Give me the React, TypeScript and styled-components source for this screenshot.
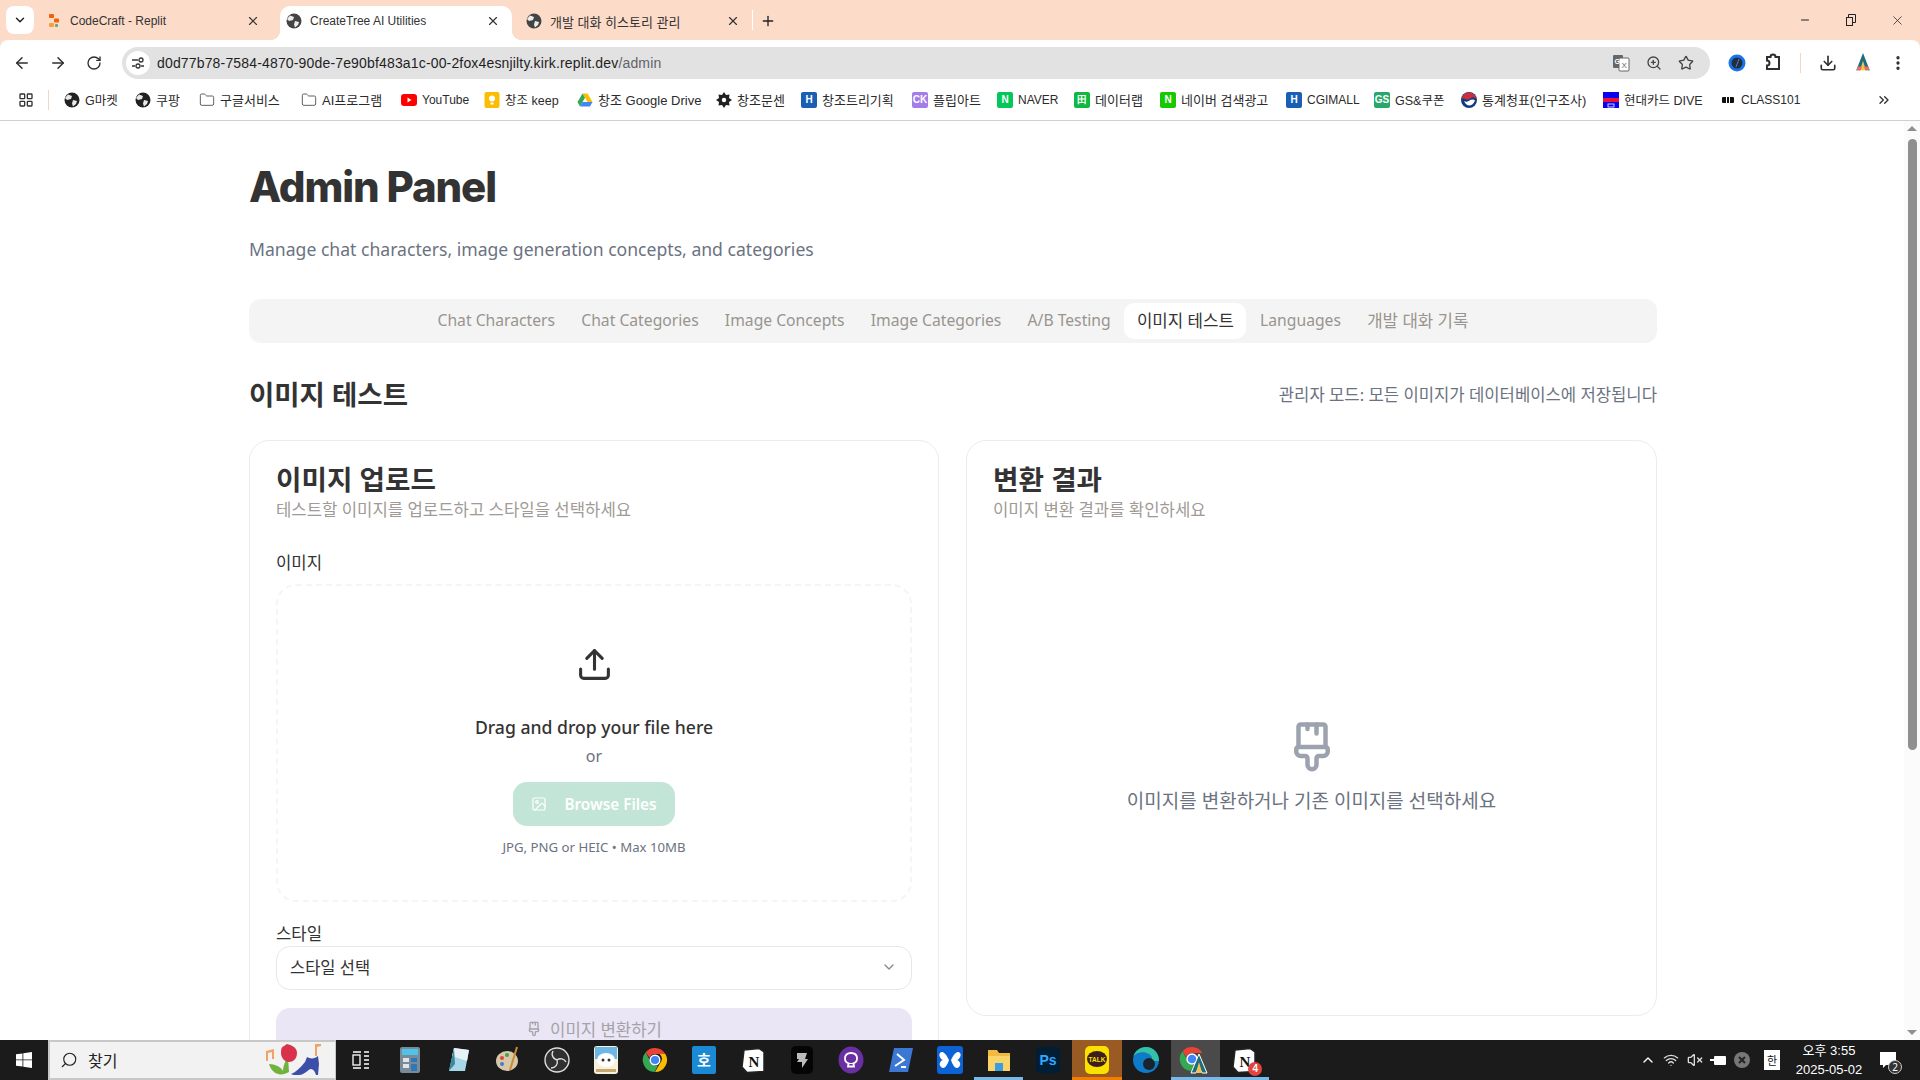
import styled, { createGlobalStyle } from "styled-components";
import {
  ArrowLeft,
  ArrowRight,
  ChevronDown,
  ChevronUp,
  ChevronsRight,
  Download,
  EllipsisVertical,
  Folder,
  Image as ImageIcon,
  LayoutGrid,
  Minus,
  PaintbrushVertical,
  Plus,
  RotateCw,
  Search,
  Star,
  Upload,
  VolumeX,
  Wifi,
  X,
  ZoomIn,
} from "lucide-react";

const GlobalStyle = createGlobalStyle`
  html, body {
    margin: 0;
    padding: 0;
    height: 100%;
    overflow: hidden;
    background: #fff;
  }
  * {
    box-sizing: border-box;
  }
  body {
    font-family: "Noto Sans", "Noto Sans CJK KR", sans-serif;
    color: #333;
  }
`;

const Screen = styled.div`
  width: 1920px;
  height: 1080px;
  display: flex;
  flex-direction: column;
  overflow: hidden;
  background: #fddbc9;
`;

/* ---------- browser chrome ---------- */

const TabStrip = styled.div`
  height: 40px;
  flex: none;
  background: #fddbc9;
  display: flex;
  align-items: flex-end;
  padding-left: 6px;
  position: relative;
`;

const TabSearch = styled.div`
  width: 28px;
  height: 28px;
  margin-bottom: 6px;
  margin-right: 6px;
  border-radius: 8px;
  background: #fff;
  display: flex;
  align-items: center;
  justify-content: center;
`;

const Tab = styled.div<{ $active?: boolean }>`
  width: 232px;
  height: 34px;
  padding: 0 12px 4px 6px;
  display: flex;
  align-items: center;
  gap: 8px;
  font-size: 12px;
  color: #333;
  border-radius: 10px 10px 0 0;
  position: relative;
  background: ${(p) => (p.$active ? "#fff" : "transparent")};
  margin-right: 8px;
  font-family: "Liberation Sans", "Noto Sans CJK KR", sans-serif;
  ${(p) =>
    p.$active &&
    `
    &::before, &::after {
      content: "";
      position: absolute;
      bottom: 0;
      width: 10px;
      height: 10px;
    }
    &::before {
      left: -10px;
      background: radial-gradient(circle at 0 0, transparent 10px, #fff 10.5px);
    }
    &::after {
      right: -10px;
      background: radial-gradient(circle at 100% 0, transparent 10px, #fff 10.5px);
    }
  `}
`;

const TabTitle = styled.span<{ $ko?: boolean }>`
  flex: 1;
  white-space: nowrap;
  font-size: ${(p) => (p.$ko ? "13px" : "12px")};
`;

const TabDivider = styled.span`
  width: 1px;
  height: 20px;
  margin-bottom: 10px;
  margin-left: -8px;
  background: #fff;
`;

const NewTab = styled.div`
  width: 28px;
  height: 28px;
  display: flex;
  align-items: center;
  justify-content: center;
  margin-bottom: 5px;
  margin-left: 1px;
`;

const WindowControls = styled.div`
  margin-left: auto;
  display: flex;
  align-items: center;
  height: 40px;
`;

const WindowButton = styled.div`
  width: 46px;
  height: 40px;
  display: flex;
  align-items: center;
  justify-content: center;
`;

const Toolbar = styled.div`
  height: 40px;
  flex: none;
  background: #fff;
  border-radius: 8px 8px 0 0;
  display: flex;
  align-items: center;
  padding: 7px 0 1px 4px;
`;

const NavButton = styled.div`
  width: 36px;
  height: 32px;
  display: flex;
  align-items: center;
  justify-content: center;
  color: #2f2f2f;
`;

const Address = styled.div`
  width: 1588px;
  height: 32px;
  margin-left: 10px;
  border-radius: 16px;
  background: #e2e2e2;
  display: flex;
  align-items: center;
  padding: 0 16px 0 4px;
  font-size: 14px;
  letter-spacing: 0.16px;
  font-family: "Liberation Sans", sans-serif;
  color: #1f1f1f;
`;

const SiteButton = styled.div`
  width: 24px;
  height: 24px;
  border-radius: 50%;
  background: #fff;
  display: flex;
  align-items: center;
  justify-content: center;
  margin-right: 7px;
`;

const UrlPath = styled.span`
  color: #5f6368;
`;

const AddressActions = styled.div`
  margin-left: auto;
  display: flex;
  align-items: center;
  gap: 16px;
  color: #444;
`;

const ToolbarActions = styled.div`
  margin-left: 18px;
  flex: 1;
  display: flex;
  align-items: center;
  justify-content: space-between;
  padding-right: 13px;
  color: #2f2f2f;
`;

const ToolbarDivider = styled.span`
  width: 1px;
  height: 20px;
  background: #f3d5c5;
`;

const Bookmarks = styled.div`
  height: 41px;
  flex: none;
  background: #fff;
  border-bottom: 1px solid #d0d0d0;
  display: flex;
  align-items: center;
  padding-left: 18px;
  font-family: "Liberation Sans", "Noto Sans CJK KR", sans-serif;
  font-size: 12px;
  color: #2b2b2b;
  position: relative;
`;

const BarDivider = styled.span`
  width: 1px;
  height: 20px;
  background: #f3d5c5;
  margin: 0 15px 0 14px;
`;

const Bookmark = styled.div<{ $w: number }>`
  width: ${(p) => p.$w}px;
  flex: none;
  display: flex;
  align-items: center;
  gap: 5px;
  white-space: nowrap;
  overflow: hidden;
`;

const BookmarkLabel = styled.span<{ $size: number }>`
  font-size: ${(p) => p.$size}px;
  margin-bottom: ${(p) => (p.$size > 12 ? "2px" : "0")};
`;

const Favicon = styled.span<{ $bg: string; $fg?: string }>`
  width: 16px;
  height: 16px;
  flex: none;
  border-radius: 2px;
  background: ${(p) => p.$bg};
  color: ${(p) => p.$fg ?? "#fff"};
  font-size: 10px;
  font-weight: 700;
  line-height: 16px;
  text-align: center;
  font-family: "Liberation Sans", sans-serif;
`;

const OverflowButton = styled.div`
  position: absolute;
  right: 28px;
  top: 12px;
  display: flex;
`;

/* ---------- page ---------- */

const Viewport = styled.div`
  flex: 1;
  min-height: 0;
  display: flex;
  overflow: hidden;
  background: #fff;
`;

const PageScroll = styled.div`
  flex: 1;
  min-width: 0;
  overflow: hidden;
`;

const Container = styled.main`
  width: 1408px;
  margin-left: 249px;
  padding-top: 42px;
`;

const Title = styled.h1`
  margin: 0;
  font-family: Inter, "Noto Sans", sans-serif;
  font-size: 42px;
  line-height: 48px;
  font-weight: 800;
  letter-spacing: -1.15px;
  color: #333;
`;

const Subtitle = styled.p`
  margin: 24px 0 0;
  font-size: 17.6px;
  line-height: 28px;
  color: #6b7280;
`;

const TabList = styled.nav`
  margin-top: 36px;
  height: 44px;
  border-radius: 12px;
  background: #f4f4f4;
  display: flex;
  align-items: center;
  justify-content: center;
  gap: 1px;
`;

const PageTab = styled.div<{ $active?: boolean; $ko?: boolean }>`
  height: 36px;
  padding: 0 12.6px 2px;
  border-radius: 10px;
  display: flex;
  align-items: center;
  font-size: ${(p) => (p.$ko ? "16.8px" : "15.7px")};
  color: ${(p) => (p.$active ? "#333" : "#99948f")};
  background: ${(p) => (p.$active ? "#fff" : "transparent")};
  white-space: nowrap;
`;

const SectionHeader = styled.div`
  margin-top: 33px;
  height: 36px;
  display: flex;
  align-items: center;
  justify-content: space-between;
`;

const SectionTitle = styled.h2`
  margin: 2px 0 0;
  font-size: 27.5px;
  line-height: 36px;
  font-weight: 700;
  color: #333;
`;

const AdminNote = styled.span`
  font-size: 16.65px;
  color: #6b7280;
`;

const Columns = styled.div`
  margin-top: 28px;
  display: grid;
  grid-template-columns: 690px 691px;
  justify-content: space-between;
  align-items: start;
`;

const Card = styled.section<{ $height?: number }>`
  border: 1px solid #ececec;
  border-radius: 20px;
  padding: 20px 26px 40px;
  background: #fff;
  display: flex;
  flex-direction: column;
  height: ${(p) => (p.$height ? `${p.$height}px` : "auto")};
`;

const CardTitle = styled.h3`
  margin: 0;
  font-size: 27.7px;
  line-height: 36px;
  font-weight: 700;
  color: #333;
`;

const CardSub = styled.p`
  margin: 3px 0 0;
  font-size: 16.7px;
  line-height: 20px;
  color: #a09b96;
`;

const Label = styled.div<{ $top: number }>`
  margin-top: ${(p) => p.$top}px;
  font-size: 16.7px;
  line-height: 20px;
  color: #333;
`;

const DropZone = styled.div`
  margin-top: 11px;
  height: 318px;
  border: 2px dashed #f5f5f5;
  border-radius: 20px;
  padding-top: 60px;
  display: flex;
  flex-direction: column;
  align-items: center;
  color: #333;
`;

const DropTitle = styled.div`
  margin-top: 30px;
  font-size: 17.6px;
  line-height: 28px;
  font-weight: 500;
  color: #333;
`;

const DropOr = styled.div`
  margin-top: 4px;
  font-size: 16px;
  line-height: 22px;
  color: #6b7280;
`;

const BrowseButton = styled.div`
  margin-top: 15px;
  width: 162px;
  height: 44px;
  border-radius: 14px;
  background: #c3e5d8;
  color: #fff;
  display: flex;
  align-items: center;
  justify-content: center;
  gap: 17px;
  font-size: 15.3px;
  font-weight: 600;
`;

const DropHint = styled.div`
  margin-top: 12px;
  font-size: 13.2px;
  line-height: 18px;
  color: #6b7280;
`;

const Select = styled.div`
  margin-top: 2px;
  height: 44px;
  border: 1px solid #e8e8e8;
  border-radius: 14px;
  padding: 0 14px 3px 13px;
  display: flex;
  align-items: center;
  justify-content: space-between;
  font-size: 16.5px;
  color: #333;
`;

const ConvertButton = styled.div`
  margin-top: 18px;
  height: 44px;
  padding-bottom: 3px;
  border-radius: 14px;
  background: #ebe6f5;
  color: #a3a3a8;
  display: flex;
  align-items: center;
  justify-content: center;
  gap: 8px;
  font-size: 16.7px;
`;

const EmptyResult = styled.div`
  flex: 1;
  display: flex;
  flex-direction: column;
  align-items: center;
  justify-content: center;
  gap: 13px;
  color: #9ca3af;
  padding-top: 39px;
`;

const EmptyText = styled.div`
  font-size: 19px;
  line-height: 28px;
  color: #6b7280;
`;

const Scrollbar = styled.div`
  width: 16px;
  flex: none;
  background: #fbfbfb;
  display: flex;
  flex-direction: column;
  align-items: center;
  justify-content: space-between;
  position: relative;
  padding: 5px 0;
`;

const ScrollArrow = styled.span<{ $down?: boolean }>`
  width: 0;
  height: 0;
  border-left: 5px solid transparent;
  border-right: 5px solid transparent;
  ${(p) =>
    p.$down ? "border-top: 5px solid #8f8f8f;" : "border-bottom: 5px solid #8f8f8f;"}
`;

const ScrollThumb = styled.span`
  position: absolute;
  top: 18px;
  left: 4px;
  width: 9px;
  height: 611px;
  border-radius: 5px;
  background: #8f8f8f;
`;

/* ---------- taskbar ---------- */

const Taskbar = styled.footer`
  height: 40px;
  flex: none;
  background: #1b1b1b;
  display: flex;
  align-items: stretch;
  position: relative;
  color: #fff;
`;

const StartButton = styled.div`
  width: 48px;
  display: flex;
  align-items: center;
  justify-content: center;
`;

const SearchBox = styled.div`
  width: 288px;
  background: #f2f2f2;
  border: 2px solid #c8c8c8;
  border-right-width: 1px;
  display: flex;
  align-items: center;
  padding-left: 10px;
  gap: 10px;
  font-size: 16px;
  color: #222;
  font-family: "Noto Sans CJK KR", sans-serif;
`;

const SearchArt = styled.div`
  margin-left: auto;
  display: flex;
  margin-right: 1px;
`;

const TaskItem = styled.div<{ $line?: boolean; $bg?: string; $lineColor?: string }>`
  width: 49.1px;
  flex: none;
  display: flex;
  align-items: center;
  justify-content: center;
  background: ${(p) => p.$bg ?? "transparent"};
  border-bottom: 3px solid
    ${(p) => (p.$line ? p.$lineColor ?? "#76b9ed" : "transparent")};
  padding-top: 3px;
`;

const Tray = styled.div`
  margin-left: auto;
  display: flex;
  align-items: center;
  gap: 7.5px;
  padding-right: 17px;
`;

const Clock = styled.div`
  width: 73px;
  margin-left: 5px;
  text-align: center;
  font-size: 13px;
  line-height: 19px;
  white-space: nowrap;
  font-family: "Liberation Sans", "Noto Sans CJK KR", sans-serif;
`;

const Notice = styled.div`
  position: relative;
  width: 30px;
  height: 30px;
  display: flex;
  align-items: center;
  justify-content: center;
`;

const NoticeCount = styled.span`
  position: absolute;
  right: 1px;
  bottom: 1px;
  width: 14px;
  height: 14px;
  border-radius: 50%;
  background: #333;
  border: 1px solid #ccc;
  font-size: 10px;
  line-height: 12px;
  text-align: center;
`;

const ImeKey = styled.span`
  width: 16px;
  height: 20px;
  margin-left: 7px;
  background: #fff;
  color: #111;
  font-size: 11px;
  line-height: 20px;
  text-align: center;
  font-family: "Noto Sans CJK KR", sans-serif;
`;

const BadgeWrap = styled.div`
  position: relative;
  display: flex;
`;

const NotionBadge = styled.span`
  position: absolute;
  right: -5px;
  bottom: -3px;
  width: 14px;
  height: 14px;
  border-radius: 50%;
  background: #e0443e;
  color: #fff;
  font: 700 10px/14px "Liberation Sans", sans-serif;
  text-align: center;
`;

/* ---------- logo drawings ---------- */

function GlobeFavicon({ color = "#444" }: { color?: string }) {
  return (
    <svg width="16" height="16" viewBox="0 0 16 16" style={{ flex: "none" }}>
      <circle cx="8" cy="8" r="7.5" fill={color} />
      <path d="M4 2.5 8 4 7 7 3 8 1 6zM9 8l4 1-1 3-3 2.500-1-3z" fill="#fff" opacity=".9" />
    </svg>
  );
}

function SiteTuneIcon() {
  return (
    <svg width="14" height="14" viewBox="0 0 14 14" fill="none" stroke="#333" strokeWidth="1.300">
      <path d="M1 4h6M1 10h3M10 10h3" />
      <circle cx="10" cy="4" r="2" />
      <circle cx="7" cy="10" r="2" />
    </svg>
  );
}

function ReplitLogo() {
  return (
    <svg width="16" height="16" viewBox="0 0 16 16" style={{ flex: "none" }}>
      <rect x="3" y="1" width="5" height="4" rx="1" fill="#f26207" />
      <rect x="8" y="5.500" width="5" height="4" rx="1" fill="#f26207" />
      <rect x="3" y="10" width="5" height="4" rx="1" fill="#f59e42" />
      <rect x="9" y="11" width="3" height="3" rx="1" fill="#57b05d" />
    </svg>
  );
}

function YouTubeLogo() {
  return (
    <svg width="16" height="16" viewBox="0 0 16 16" style={{ flex: "none" }}>
      <rect y="2" width="16" height="12" rx="3" fill="#f00" />
      <path d="M6.500 5.500v5l4-2.500z" fill="#fff" />
    </svg>
  );
}

function DriveLogo() {
  return (
    <svg width="16" height="16" viewBox="0 0 16 16" style={{ flex: "none" }}>
      <path d="M5.500 1.500h5l5 8.500H10.500z" fill="#fbbc04" />
      <path d="M5.500 1.500 0.500 10l2.500 4.500L8 5.800z" fill="#34a853" />
      <path d="M3 14.500h10l2.500-4.500H5.500z" fill="#4285f4" />
    </svg>
  );
}

function KeepLogo() {
  return (
    <svg width="16" height="16" viewBox="0 0 16 16" style={{ flex: "none" }}>
      <rect x="0.500" width="15" height="16" rx="2" fill="#fbbc04" />
      <circle cx="8" cy="6.500" r="3" fill="#fff" />
      <rect x="6.500" y="10.500" width="3" height="2" fill="#fff" />
    </svg>
  );
}

function GearLogo() {
  return (
    <svg width="16" height="16" viewBox="0 0 16 16" style={{ flex: "none" }}>
      <path d="M8 0l2 3 3.500-.5L13 6l3 2-3 2 .5 3.500L10 13l-2 3-2-3-3.500.5L3 10 0 8l3-2-.5-3.500L6 3z" fill="#222" />
      <circle cx="8" cy="8" r="2.200" fill="#fff" />
    </svg>
  );
}

function KoreaLogo() {
  return (
    <svg width="16" height="16" viewBox="0 0 16 16" style={{ flex: "none" }}>
      <circle cx="8" cy="8" r="8" fill="#0f3b82" />
      <path d="M0.500 8a7.500 7.500 0 0 1 15 0c-1-3-4-3.500-5.500-2S6 8.500 4 7 1 6.500.5 8z" fill="#cd2e3a" />
      <path d="M3 9c2 1.500 4 .5 5.500-.5s4-1.500 5.500 0c-1 3-3.500 5-6 5S4 11 3 9z" fill="#fff" />
    </svg>
  );
}

function HyundaiLogo() {
  return (
    <svg width="16" height="16" viewBox="0 0 16 16" style={{ flex: "none" }}>
      <rect width="16" height="16" fill="#0a00f0" />
      <rect y="6" width="16" height="4" fill="#e8103a" />
      <rect x="5" y="12" width="6" height="3" fill="none" stroke="#fff" strokeWidth=".8" />
    </svg>
  );
}

function ClassLogo() {
  return (
    <svg width="16" height="16" viewBox="0 0 16 16" style={{ flex: "none" }}>
      <rect x="2" y="5" width="12" height="6" rx="1" fill="#111" />
      <rect x="6" y="5" width="1" height="6" fill="#fff" />
      <rect x="9" y="5" width="1" height="6" fill="#fff" />
    </svg>
  );
}

function ChromeLogo({ size = 26 }: { size?: number }) {
  return (
    <svg width={size} height={size} viewBox="0 0 26 26">
      <path d="M13 1a12 12 0 0 1 10.400 6H13a6 6 0 0 0-5.600 3.800L3.600 5.300A12 12 0 0 1 13 1z" fill="#ea4335" />
      <path d="M23.400 7A12 12 0 0 1 13 25l5.200-9a6 6 0 0 0-.6-9z" fill="#fbbc04" />
      <path d="M3.600 5.300 8.800 15A6 6 0 0 0 16 18.500L12.500 25A12 12 0 0 1 3.600 5.300z" fill="#34a853" />
      <circle cx="13" cy="13" r="4.800" fill="#4285f4" stroke="#fff" strokeWidth="1.400" />
    </svg>
  );
}

function ArcLogo({ size = 16 }: { size?: number }) {
  return (
    <svg width={size} height={size * 1.2} viewBox="0 0 16 20">
      <path d="M8 0 1 18h4.500L8 11l2.500 7H15z" fill="#1c6e7d" />
      <path d="M8 8 5 18h6z" fill="#f4c152" />
      <path d="M1 18h4.500L7 14H2.600zM15 18h-4.500L9 14h4.400z" fill="#e5705d" />
    </svg>
  );
}

function TranslateLogo() {
  return (
    <svg width="18" height="18" viewBox="0 0 18 18">
      <rect x="1" y="1" width="10" height="13" rx="1" fill="#666" />
      <rect x="7" y="4" width="10" height="13" rx="1" fill="#fff" stroke="#666" />
      <text x="2.500" y="10" fontSize="7" fontWeight="700" fill="#fff" fontFamily="Liberation Sans">G</text>
      <text x="9.500" y="14" fontSize="8" fill="#666" fontFamily="Liberation Sans">X</text>
    </svg>
  );
}

function ExtensionLogo() {
  return (
    <svg width="18" height="18" viewBox="0 0 18 18">
      <circle cx="9" cy="9" r="8.500" fill="#1a73e8" />
      <circle cx="9" cy="9" r="5.500" fill="#1d2d44" />
      <path d="M11 5 8 13" stroke="#6a7d98" strokeWidth="1" />
    </svg>
  );
}

function PuzzleLogo() {
  return (
    <svg width="18" height="20" viewBox="0 0 18 20" fill="none" stroke="#2f2f2f" strokeWidth="2">
      <path d="M3 4h3.500a2.500 2.500 0 0 1 5 0H15v12H3v-3.500a2.500 2.500 0 0 0 0-5z" />
    </svg>
  );
}

function WindowsLogo() {
  return (
    <svg width="16" height="16" viewBox="0 0 16 16" fill="#fff">
      <path d="M0 2.300 6.500 1.400V7.500H0zM7.300 1.300 16 0v7.500H7.300zM0 8.300h6.500v6.300L0 13.700zM7.300 8.300H16V16l-8.700-1.300z" />
    </svg>
  );
}

function RestoreIcon() {
  return (
    <svg width="12" height="12" viewBox="0 0 12 12" fill="none" stroke="#222">
      <rect x="1.500" y="3.500" width="6" height="8" />
      <path d="M3.500 3.500v-3h7v8h-3" />
    </svg>
  );
}

function SearchFlowers() {
  return (
    <svg width="74" height="36" viewBox="0 0 68 36">
      <path d="M26 30C16 36 8 30 6 22c6 0 12 3 14 7 0-5 3-12 5-14z" fill="#6fb23c" />
      <path d="M24 2c4 1 10 3 10 9s-4 9-8 9-8-4-8-9 1-6 3-7z" fill="#d8334a" />
      <path d="M36 33c-4 0-7 0-8-1 5-2 9-6 14-12l2-5c3 2 8 2 11-1l1 8-1 11h-2c-1-4-3-6-5-6-3 0-6 6-12 6z" fill="#3c4fa8" />
      <path d="M3 9l8-2v10H9V10l-4 1v8H3z" fill="#f2a264" />
      <path d="M52 2h6v2l-4 1v9h-2z" fill="#f2a264" />
    </svg>
  );
}

function TaskViewIcon() {
  return (
    <svg width="18" height="18" viewBox="0 0 18 18" fill="none" stroke="#fff" strokeWidth="1.300">
      <rect x="1" y="4" width="7" height="10" />
      <path d="M1 1h8M1 17h8M12 1h5M12 5h5M12 9h5M12 13h5M12 17h5" />
    </svg>
  );
}

function CalcIcon() {
  return (
    <svg width="20" height="26" viewBox="0 0 20 26">
      <rect width="20" height="26" rx="2" fill="#7b8a97" />
      <rect x="2" y="2" width="16" height="6" fill="#4fc3e8" />
      <rect x="3" y="11" width="6" height="4" fill="#dfe6ea" />
      <rect x="11" y="11" width="6" height="4" fill="#2f78b7" />
      <rect x="3" y="17" width="6" height="4" fill="#dfe6ea" />
      <rect x="11" y="17" width="6" height="7" fill="#2f78b7" />
    </svg>
  );
}

function NotepadIcon() {
  return (
    <svg width="24" height="26" viewBox="0 0 24 26">
      <path d="M7 1 22 3 18 24 2 24z" fill="#a8d8e8" />
      <path d="M7 1 22 3 20 14 5 9z" fill="#e8f3f7" />
      <path d="M2 24 7 1l1 16z" fill="#3b8aa0" />
    </svg>
  );
}

function PaletteIcon() {
  return (
    <svg width="26" height="28" viewBox="0 0 26 28">
      <ellipse cx="12" cy="15" rx="11" ry="10" fill="#d8c8a8" />
      <circle cx="7" cy="12" r="2" fill="#d8473a" />
      <circle cx="12" cy="9" r="2" fill="#3ba55c" />
      <circle cx="7" cy="18" r="2" fill="#3f7fd4" />
      <path d="M22 1 15 24" stroke="#c98a3a" strokeWidth="2" />
    </svg>
  );
}

function ObsIcon() {
  return (
    <svg width="26" height="26" viewBox="0 0 26 26" fill="none" stroke="#ddd" strokeWidth="1.400">
      <circle cx="13" cy="13" r="12" fill="#303030" />
      <path d="M9 4a6 6 0 0 0 5 9M22 15a6 6 0 0 0-9-2M7 21a6 6 0 0 0 6-8" />
    </svg>
  );
}

function CloudAppIcon() {
  return (
    <svg width="24" height="28" viewBox="0 0 24 28">
      <rect width="24" height="28" rx="3" fill="#f7f1dc" />
      <rect x="1" y="1" width="22" height="12" fill="#6bb8e6" />
      <ellipse cx="12" cy="14" rx="9" ry="7" fill="#fff" />
      <circle cx="9" cy="14" r="1.500" fill="#333" />
      <circle cx="15" cy="14" r="1.500" fill="#333" />
      <rect x="2" y="23" width="20" height="3" fill="#c8a870" />
    </svg>
  );
}

function BlueHangulIcon() {
  return (
    <svg width="24" height="28" viewBox="0 0 24 28">
      <rect width="24" height="28" rx="2" fill="#1a8ad4" />
      <text x="12" y="20" textAnchor="middle" fontSize="15" fontWeight="700" fill="#fff" fontFamily="Noto Sans CJK KR">호</text>
    </svg>
  );
}

function NotionIcon() {
  return (
    <svg width="26" height="26" viewBox="0 0 26 26">
      <path d="M4 3 19 1.500 24 5v19.500L7 25.500 2 20z" fill="#fff" stroke="#222" strokeWidth="1.500" />
      <text x="14" y="20" textAnchor="middle" fontSize="15" fontWeight="700" fill="#111" fontFamily="Liberation Serif">N</text>
    </svg>
  );
}

function DarkShieldIcon() {
  return (
    <svg width="22" height="28" viewBox="0 0 22 28">
      <rect width="22" height="28" rx="5" fill="#050505" />
      <path d="M6 7h10l-2 6h3l-6 9v-6H6l2-3H6z" fill="#bbb" />
    </svg>
  );
}

function GithubIcon() {
  return (
    <svg width="26" height="28" viewBox="0 0 26 28">
      <ellipse cx="13" cy="14" rx="12.500" ry="13.500" fill="#6a2fa0" />
      <path d="M13 7c-4 0-6 2-6 5.500 0 3 2 4.500 4 5-1 .5-1 1-1 3h6c0-2 0-2.500-1-3 2-.5 4-2 4-5C19 9 17 7 13 7z" fill="none" stroke="#fff" strokeWidth="1.800" />
    </svg>
  );
}

function PowerShellIcon() {
  return (
    <svg width="26" height="26" viewBox="0 0 26 26">
      <path d="M6 1h19l-5 24H1z" fill="#3a78d4" />
      <path d="M9 7l7 6-9 6" fill="none" stroke="#fff" strokeWidth="2" />
      <path d="M13 20h5" stroke="#fff" strokeWidth="2" />
    </svg>
  );
}

function ButterflyIcon() {
  return (
    <svg width="26" height="28" viewBox="0 0 26 28">
      <rect width="26" height="28" rx="3" fill="#0b63d6" />
      <path d="M12 14C8 6 5 5 3 7s1 7 3 7c-2 0-5 4-2 7s6-1 8-7zM14 14c4-8 7-9 9-7s-1 7-3 7c2 0 5 4 2 7s-6-1-8-7z" fill="#fff" />
    </svg>
  );
}

function ExplorerIcon() {
  return (
    <svg width="26" height="26" viewBox="0 0 26 26">
      <path d="M2 3h9l2 3h11v18H2z" fill="#f4b93f" />
      <rect x="2" y="9" width="22" height="15" fill="#fad468" />
      <rect x="9" y="16" width="8" height="8" fill="#3a9ee0" />
    </svg>
  );
}

function PhotoshopIcon() {
  return (
    <svg width="24" height="26" viewBox="0 0 24 26">
      <rect width="24" height="26" rx="4" fill="#001e36" />
      <text x="12" y="18" textAnchor="middle" fontSize="14" fontWeight="700" fill="#31a8ff" fontFamily="Liberation Sans">Ps</text>
    </svg>
  );
}

function KakaoIcon() {
  return (
    <svg width="24" height="28" viewBox="0 0 24 28">
      <rect width="24" height="28" rx="5" fill="#fae100" />
      <ellipse cx="12" cy="13" rx="10" ry="8" fill="#3c1e1e" />
      <text x="12" y="15.500" textAnchor="middle" fontSize="6.500" fontWeight="700" fill="#fae100" fontFamily="Liberation Sans">TALK</text>
    </svg>
  );
}

function EdgeIcon() {
  return (
    <svg width="28" height="28" viewBox="0 0 28 28">
      <circle cx="14" cy="14" r="13" fill="#0f7ac8" />
      <path d="M27 15C27 7 21 1 14 1 8 1 3 5 1.500 10 5 6 12 5 17 8c3 2 4 5 2 7h8z" fill="#35c1a8" />
      <circle cx="17" cy="18" r="6" fill="#1b1b1b" opacity=".9" />
    </svg>
  );
}

function ChromeArcIcon() {
  return (
    <svg width="32" height="32" viewBox="0 0 32 32">
      <g transform="translate(0 2)">
        <path d="M13 1a12 12 0 0 1 10.400 6H13a6 6 0 0 0-5.600 3.800L3.600 5.300A12 12 0 0 1 13 1z" fill="#ea4335" />
        <path d="M3.600 5.300 8.800 15A6 6 0 0 0 16 18.500L12.500 25A12 12 0 0 1 3.600 5.300z" fill="#34a853" />
        <circle cx="13" cy="13" r="5" fill="#4285f4" stroke="#fff" strokeWidth="1.400" />
        <path d="M20 8 12 27h5l3-7 3 7h5z" fill="#1c6e7d" stroke="#fff" strokeWidth="1" />
        <path d="M20 16l-3 11h6z" fill="#f4c152" />
      </g>
    </svg>
  );
}

const bookmarks = [
  { label: "G마켓", w: 71, size: 12.5, icon: <GlobeFavicon color="#222" /> },
  { label: "쿠팡", w: 64, size: 13, icon: <GlobeFavicon color="#222" /> },
  { label: "구글서비스", w: 102, size: 13, icon: <Folder size={16} strokeWidth={1.4} color="#555" /> },
  { label: "AI프로그램", w: 100, size: 13, icon: <Folder size={16} strokeWidth={1.4} color="#555" /> },
  { label: "YouTube", w: 83, size: 12, icon: <YouTubeLogo /> },
  { label: "창조 keep", w: 93, size: 12.5, icon: <KeepLogo /> },
  { label: "창조 Google Drive", w: 139, size: 13, icon: <DriveLogo /> },
  { label: "창조문센", w: 85, size: 13, icon: <GearLogo /> },
  { label: "창조트리기획", w: 111, size: 13, icon: <Favicon $bg="#1a5fb4">H</Favicon> },
  { label: "플립아트", w: 85, size: 13, icon: <Favicon $bg="#a47ee8">CK</Favicon> },
  { label: "NAVER", w: 77, size: 12, icon: <Favicon $bg="#03c75a">N</Favicon> },
  { label: "데이터랩", w: 86, size: 13, icon: <Favicon $bg="#0fb83f">田</Favicon> },
  { label: "네이버 검색광고", w: 126, size: 13, icon: <Favicon $bg="#18c800">N</Favicon> },
  { label: "CGIMALL", w: 88, size: 12, icon: <Favicon $bg="#1a5fb4">H</Favicon> },
  { label: "GS&쿠폰", w: 87, size: 12.5, icon: <Favicon $bg="#28a86a">GS</Favicon> },
  { label: "통계청표(인구조사)", w: 142, size: 13, icon: <KoreaLogo /> },
  { label: "현대카드 DIVE", w: 117, size: 12.5, icon: <HyundaiLogo /> },
  { label: "CLASS101", w: 90, size: 12, icon: <ClassLogo /> },
];

const pageTabs = [
  { label: "Chat Characters" },
  { label: "Chat Categories" },
  { label: "Image Concepts" },
  { label: "Image Categories" },
  { label: "A/B Testing" },
  { label: "이미지 테스트", ko: true, active: true },
  { label: "Languages" },
  { label: "개발 대화 기록", ko: true },
];

export default function App() {
  return (
    <Screen>
      <GlobalStyle />
      <TabStrip>
        <TabSearch>
          <ChevronDown size={14} strokeWidth={2.5} color="#222" />
        </TabSearch>
        <Tab>
          <ReplitLogo />
          <TabTitle>CodeCraft - Replit</TabTitle>
          <X size={14} color="#333" />
        </Tab>
        <Tab $active>
          <GlobeFavicon />
          <TabTitle>CreateTree AI Utilities</TabTitle>
          <X size={14} color="#333" />
        </Tab>
        <Tab>
          <GlobeFavicon />
          <TabTitle $ko>개발 대화 히스토리 관리</TabTitle>
          <X size={14} color="#333" />
        </Tab>
        <TabDivider />
        <NewTab>
          <Plus size={16} strokeWidth={2} color="#222" />
        </NewTab>
        <WindowControls>
          <WindowButton>
            <Minus size={12} color="#222" />
          </WindowButton>
          <WindowButton>
            <RestoreIcon />
          </WindowButton>
          <WindowButton>
            <X size={15} strokeWidth={1.2} color="#222" />
          </WindowButton>
        </WindowControls>
      </TabStrip>

      <Toolbar>
        <NavButton>
          <ArrowLeft size={18} strokeWidth={2} />
        </NavButton>
        <NavButton>
          <ArrowRight size={18} strokeWidth={2} />
        </NavButton>
        <NavButton>
          <RotateCw size={16} strokeWidth={2} />
        </NavButton>
        <Address>
          <SiteButton>
            <SiteTuneIcon />
          </SiteButton>
          d0d77b78-7584-4870-90de-7e90bf483a1c-00-2fox4esnjilty.kirk.replit.dev
          <UrlPath>/admin</UrlPath>
          <AddressActions>
            <TranslateLogo />
            <ZoomIn size={16} />
            <Star size={16} />
          </AddressActions>
        </Address>
        <ToolbarActions>
          <ExtensionLogo />
          <PuzzleLogo />
          <ToolbarDivider />
          <Download size={18} strokeWidth={2.2} />
          <ArcLogo />
          <EllipsisVertical size={18} strokeWidth={2.4} />
        </ToolbarActions>
      </Toolbar>

      <Bookmarks>
        <LayoutGrid size={16} strokeWidth={2} color="#333" />
        <BarDivider />
        {bookmarks.map((b) => (
          <Bookmark key={b.label} $w={b.w}>
            {b.icon}
            <BookmarkLabel $size={b.size}>{b.label}</BookmarkLabel>
          </Bookmark>
        ))}
        <OverflowButton>
          <ChevronsRight size={16} color="#333" />
        </OverflowButton>
      </Bookmarks>

      <Viewport>
        <PageScroll>
          <Container>
            <Title>Admin Panel</Title>
            <Subtitle>Manage chat characters, image generation concepts, and categories</Subtitle>
            <TabList>
              {pageTabs.map((t) => (
                <PageTab key={t.label} $active={t.active} $ko={t.ko}>
                  {t.label}
                </PageTab>
              ))}
            </TabList>
            <SectionHeader>
              <SectionTitle>이미지 테스트</SectionTitle>
              <AdminNote>관리자 모드: 모든 이미지가 데이터베이스에 저장됩니다</AdminNote>
            </SectionHeader>
            <Columns>
              <Card>
                <CardTitle>이미지 업로드</CardTitle>
                <CardSub>테스트할 이미지를 업로드하고 스타일을 선택하세요</CardSub>
                <Label $top={33}>이미지</Label>
                <DropZone>
                  <Upload size={37} strokeWidth={2} />
                  <DropTitle>Drag and drop your file here</DropTitle>
                  <DropOr>or</DropOr>
                  <BrowseButton>
                    <ImageIcon size={16} strokeWidth={1.8} />
                    Browse Files
                  </BrowseButton>
                  <DropHint>JPG, PNG or HEIC • Max 10MB</DropHint>
                </DropZone>
                <Label $top={22}>스타일</Label>
                <Select>
                  스타일 선택
                  <ChevronDown size={16} color="#888" />
                </Select>
                <ConvertButton>
                  <PaintbrushVertical size={16} />
                  이미지 변환하기
                </ConvertButton>
              </Card>
              <Card $height={576}>
                <CardTitle>변환 결과</CardTitle>
                <CardSub>이미지 변환 결과를 확인하세요</CardSub>
                <EmptyResult>
                  <PaintbrushVertical size={54} strokeWidth={2} />
                  <EmptyText>이미지를 변환하거나 기존 이미지를 선택하세요</EmptyText>
                </EmptyResult>
              </Card>
            </Columns>
          </Container>
        </PageScroll>
        <Scrollbar>
          <ScrollArrow />
          <ScrollThumb />
          <ScrollArrow $down />
        </Scrollbar>
      </Viewport>

      <Taskbar>
        <StartButton>
          <WindowsLogo />
        </StartButton>
        <SearchBox>
          <Search size={18} strokeWidth={1.5} color="#222" style={{ transform: "scaleX(-1)" }} />
          찾기
          <SearchArt>
            <SearchFlowers />
          </SearchArt>
        </SearchBox>
        <TaskItem><TaskViewIcon /></TaskItem>
        <TaskItem><CalcIcon /></TaskItem>
        <TaskItem><NotepadIcon /></TaskItem>
        <TaskItem><PaletteIcon /></TaskItem>
        <TaskItem><ObsIcon /></TaskItem>
        <TaskItem><CloudAppIcon /></TaskItem>
        <TaskItem><ChromeLogo /></TaskItem>
        <TaskItem><BlueHangulIcon /></TaskItem>
        <TaskItem><NotionIcon /></TaskItem>
        <TaskItem><DarkShieldIcon /></TaskItem>
        <TaskItem><GithubIcon /></TaskItem>
        <TaskItem><PowerShellIcon /></TaskItem>
        <TaskItem><ButterflyIcon /></TaskItem>
        <TaskItem $line><ExplorerIcon /></TaskItem>
        <TaskItem><PhotoshopIcon /></TaskItem>
        <TaskItem $line $bg="#9a5a24" $lineColor="#f57c00"><KakaoIcon /></TaskItem>
        <TaskItem><EdgeIcon /></TaskItem>
        <TaskItem $line $bg="#4a4a4a"><ChromeArcIcon /></TaskItem>
        <TaskItem $line>
          <BadgeWrap>
            <NotionIcon />
            <NotionBadge>4</NotionBadge>
          </BadgeWrap>
        </TaskItem>
        <Tray>
          <ChevronUp size={16} color="#fff" />
          <Wifi size={16} color="#ddd" />
          <VolumeX size={16} color="#ddd" />
          <svg width="16" height="14" viewBox="0 0 16 14" fill="#fff">
            <rect x="4" y="3" width="12" height="9" rx="1" />
            <rect x="0" y="6" width="4" height="2" />
          </svg>
          <svg width="16" height="16" viewBox="0 0 16 16">
            <circle cx="8" cy="8" r="8" fill="#777" />
            <path d="M5 5l6 6M11 5l-6 6" stroke="#222" strokeWidth="2" />
          </svg>
          <ImeKey>한</ImeKey>
          <Clock>
            오후 3:55
            <br />
            2025-05-02
          </Clock>
          <Notice>
            <svg width="20" height="20" viewBox="0 0 20 20" fill="#fff">
              <path d="M2 2h16v13H8l-3 3v-3H2z" />
            </svg>
            <NoticeCount>2</NoticeCount>
          </Notice>
        </Tray>
      </Taskbar>
    </Screen>
  );
}
